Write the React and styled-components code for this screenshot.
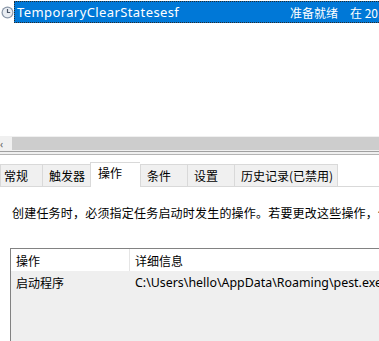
import React from "react";
import styled, { createGlobalStyle } from "styled-components";

const GlobalStyle = createGlobalStyle`
  html, body {
    margin: 0;
    padding: 0;
    background: #ffffff;
    overflow: hidden;
  }
  body {
    font-family: "Noto Sans", "Noto Sans CJK SC", sans-serif;
    font-size: 12px;
    color: #000000;
  }
`;

const Window = styled.div`
  width: 379px;
  height: 341px;
  display: flex;
  flex-direction: column;
  overflow: hidden;
`;

const TaskList = styled.div`
  height: 136px;
  padding-top: 1px;
  box-sizing: border-box;
`;

const TaskRow = styled.div`
  display: flex;
  align-items: center;
  height: 22px;
`;

const ClockIcon = styled.svg`
  width: 13px;
  height: 13px;
  margin-left: 1px;
  flex-shrink: 0;
`;

const Selection = styled.div`
  flex: 1;
  height: 22px;
  box-sizing: border-box;
  background: #0078d7;
  border: 1px dotted #2a2a2a;
  border-right: none;
  display: flex;
  align-items: center;
  color: #ffffff;
  white-space: nowrap;
  overflow: hidden;
`;

const Cell = styled.span`
  width: ${(p) => p.w}px;
  padding-left: ${(p) => p.pad || 0}px;
  flex-shrink: 0;
  font-family: ${(p) => (p.cjk ? '"Noto Sans CJK SC", sans-serif' : '"Noto Sans", sans-serif')};
  font-size: ${(p) => p.size || 12}px;
  letter-spacing: ${(p) => p.spacing || 0}px;
`;

const ScrollBar = styled.div`
  height: 15px;
  display: flex;
  align-items: stretch;
  background: #f0f0f0;
`;

const ArrowBtn = styled.div`
  width: 12px;
  display: flex;
  align-items: center;
  justify-content: flex-start;
  color: #606060;
  font-size: 10px;
  line-height: 1;
`;

const Thumb = styled.div`
  flex: 1;
  margin: 1px 0;
  background: #cdcdcd;
`;

const Splitter = styled.div`
  height: 4px;
  border-top: 1px solid #a0a0a0;
  border-bottom: 1px solid #b4b4b4;
  background: #f0f0f0;
  box-sizing: border-box;
  margin-bottom: 7px;
`;

const Tabs = styled.div`
  display: flex;
  align-items: flex-end;
  height: 24px;
  border-bottom: 1px solid #d9d9d9;
`;

const Tab = styled.div`
  width: ${(p) => p.w}px;
  height: ${(p) => (p.active ? 25 : 22)}px;
  box-sizing: border-box;
  border: 1px solid #d9d9d9;
  border-right: ${(p) => (p.last ? "1px solid #d9d9d9" : "none")};
  border-bottom: none;
  background: ${(p) => (p.active ? "#ffffff" : "#f0f0f0")};
  margin-bottom: ${(p) => (p.active ? -1 : 0)}px;
  padding-left: ${(p) => p.pad}px;
  padding-top: ${(p) => (p.active ? 2 : 3)}px;
  font-family: "Noto Sans CJK SC", sans-serif;
  font-size: 12px;
  line-height: 15px;
  white-space: nowrap;
`;

const Panel = styled.div`
  flex: 1;
  background: #ffffff;
  display: flex;
  flex-direction: column;
`;

const Description = styled.div`
  margin: 18px 0 0 12px;
  font-family: "Noto Sans CJK SC", sans-serif;
  font-size: 12px;
  letter-spacing: 0.2px;
  line-height: 16px;
  white-space: nowrap;
`;

const ListBox = styled.div`
  margin: 27px 0 0 10px;
  flex: 1;
  border-left: 1px solid #828282;
  border-top: 1px solid #828282;
  background: #efefef;
  display: flex;
  flex-direction: column;
`;

const HeaderRow = styled.div`
  display: flex;
  height: 22px;
  background: #ffffff;
  align-items: center;
`;

const HeaderCell = styled.div`
  width: ${(p) => p.w}px;
  height: 100%;
  display: flex;
  align-items: center;
  padding-left: 5px;
  box-sizing: border-box;
  border-right: ${(p) => (p.divider ? "1px solid #e5e5e5" : "none")};
  font-family: "Noto Sans CJK SC", sans-serif;
  font-size: 12px;
  flex-shrink: 0;
`;

const DataRow = styled.div`
  display: flex;
  height: 22px;
  align-items: center;
  white-space: nowrap;
`;

const DataCell = styled.div`
  width: ${(p) => p.w}px;
  padding-left: 5px;
  box-sizing: border-box;
  flex-shrink: 0;
  font-family: ${(p) => (p.cjk ? '"Noto Sans CJK SC", sans-serif' : '"Noto Sans", sans-serif')};
  font-size: ${(p) => p.size || 12}px;
`;

function Clock() {
  return (
    <ClockIcon viewBox="0 0 13 13">
      <circle cx="6.5" cy="6.5" r="6" fill="#8a97a8" />
      <circle cx="6.5" cy="6.5" r="4.8" fill="#e9edf2" />
      <path d="M6.5 3 V6.5 H9.2" stroke="#4a5566" strokeWidth="1.2" fill="none" />
    </ClockIcon>
  );
}

const tabs = [
  { label: "常规", w: 42, pad: 3 },
  { label: "触发器", w: 48, pad: 6 },
  { label: "操作", w: 50, pad: 7, active: true },
  { label: "条件", w: 47, pad: 6 },
  { label: "设置", w: 47, pad: 6 },
  { label: "历史记录(已禁用)", w: 104, pad: 6, last: true },
];

export default function App() {
  return (
    <Window>
      <GlobalStyle />
      <TaskList>
        <TaskRow>
          <Clock />
          <Selection>
            <Cell w={273} pad={2} size={13} spacing={0.4}>
              TemporaryClearStatesesf
            </Cell>
            <Cell w={60} cjk>
              准备就绪
            </Cell>
            <Cell w={60} cjk>
              在 2019
            </Cell>
          </Selection>
        </TaskRow>
      </TaskList>
      <ScrollBar>
        <ArrowBtn>‹</ArrowBtn>
        <Thumb />
      </ScrollBar>
      <Splitter />
      <Tabs>
        {tabs.map((t) => (
          <Tab key={t.label} w={t.w} pad={t.pad} active={t.active} last={t.last}>
            {t.label}
          </Tab>
        ))}
      </Tabs>
      <Panel>
        <Description>
          创建任务时，必须指定任务启动时发生的操作。若要更改这些操作，使用属性命令打开任务属性页。
        </Description>
        <ListBox>
          <HeaderRow>
            <HeaderCell w={119} divider>
              操作
            </HeaderCell>
            <HeaderCell w={250}>详细信息</HeaderCell>
          </HeaderRow>
          <DataRow>
            <DataCell w={119} cjk>
              启动程序
            </DataCell>
            <DataCell w={300} size={12.4}>
              C:\Users\hello\AppData\Roaming\pest.exe
            </DataCell>
          </DataRow>
        </ListBox>
      </Panel>
    </Window>
  );
}
